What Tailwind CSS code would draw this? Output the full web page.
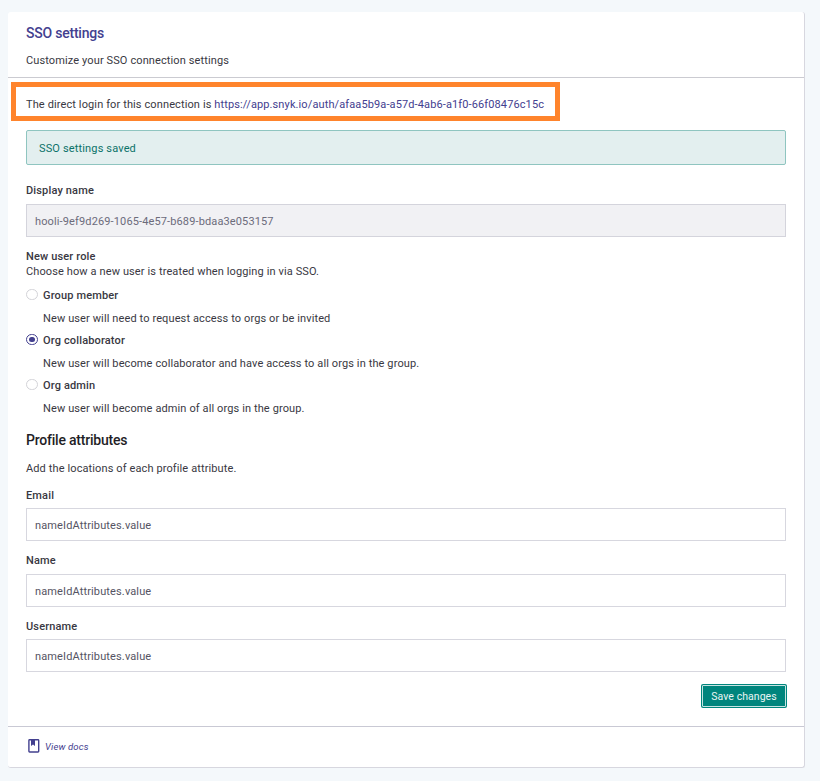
<!DOCTYPE html>
<html lang="en">
<head>
<meta charset="utf-8">
<title>SSO settings</title>
<script src="https://cdn.jsdelivr.net/npm/@tailwindcss/browser@4"></script>
</head>
<body class="h-[781px] overflow-hidden bg-[#f4f8fb] pt-3 pl-2 font-[Roboto,sans-serif] text-[11px] leading-4 tracking-[0.115px] text-[#393842]">
<main class="relative h-[756px] w-[797px] rounded-[3px] border-r border-b border-[#d7d7df] bg-white">
  <header class="h-[66px] border-b border-[#cbcbd1] px-[18px] pt-[11px]">
    <h1 class="text-[14px] leading-5 font-medium tracking-[-0.22px] text-[#43408f]">SSO settings</h1>
    <p class="mt-[10px]">Customize your SSO connection settings</p>
  </header>
  <div class="absolute top-[70px] left-[3px] h-[39px] w-[549px] border-[5px] border-[#ff842c]"></div>
  <form class="h-[648px] px-[18px] pt-[19px]">
    <p>The direct login for this connection is <a class="text-[#43408f]">https://app.snyk.io/auth/afaa5b9a-a57d-4ab6-a1f0-66f08476c15c</a></p>
    <div class="mt-[17px] flex h-[35px] w-[760px] items-center rounded-[2px] border border-[#8fc5c0] bg-[#e3efef] px-3 pt-[2px] tracking-[0.15px] text-[#0b7269]">SSO settings saved</div>
    <div class="mt-[18px] font-medium tracking-[0.15px]">Display name</div>
    <div class="mt-[5px] flex h-[33px] w-[760px] items-center border border-[#d4d4dc] bg-[#f1f1f4] px-2 pt-[2px] tracking-[0.13px] text-[#6c6b7b]">hooli-9ef9d269-1065-4e57-b689-bdaa3e053157</div>
    <div class="mt-3 font-medium tracking-[0.15px]">New user role</div>
    <p class="-mt-px">Choose how a new user is treated when logging in via SSO.</p>
    <div class="mt-2 flex h-4 items-center gap-[5px] font-medium tracking-[0.15px]"><span class="-mt-[3px] h-[11px] w-3 rounded-full border border-[#d3d3d8]"></span>Group member</div>
    <p class="mt-[7px] pl-[17px]">New user will need to request access to orgs or be invited</p>
    <div class="mt-[6px] flex h-4 items-center gap-[5px] font-medium tracking-[0.15px]"><span class="-mt-[3px] flex h-[11px] w-3 items-center justify-center rounded-full border border-[#43408f]"><span class="h-[5px] w-[6px] rounded-full bg-[#43408f]"></span></span>Org collaborator</div>
    <p class="mt-[7px] pl-[17px]">New user will become collaborator and have access to all orgs in the group.</p>
    <div class="mt-[6px] flex h-4 items-center gap-[5px] font-medium tracking-[0.15px]"><span class="-mt-[3px] h-[11px] w-3 rounded-full border border-[#d3d3d8]"></span>Org admin</div>
    <p class="mt-[7px] pl-[17px]">New user will become admin of all orgs in the group.</p>
    <h2 class="mt-[13px] text-[14px] leading-5 font-medium tracking-[-0.22px] text-[#1f1e26]">Profile attributes</h2>
    <p class="mt-[11px]">Add the locations of each profile attribute.</p>
    <div class="mt-[11px] font-medium tracking-[0.15px]">Email</div>
    <div class="mt-1 flex h-[33px] w-[760px] items-center border border-[#d7d7df] px-2 pt-[2px] tracking-[0.13px] text-[#555463]">nameIdAttributes.value</div>
    <div class="mt-3 font-medium tracking-[0.15px]">Name</div>
    <div class="mt-[5px] flex h-[33px] w-[760px] items-center border border-[#d7d7df] px-2 pt-[2px] tracking-[0.13px] text-[#555463]">nameIdAttributes.value</div>
    <div class="mt-3 font-medium tracking-[0.15px]">Username</div>
    <div class="mt-1 flex h-[33px] w-[760px] items-center border border-[#d7d7df] px-2 pt-[2px] tracking-[0.13px] text-[#555463]">nameIdAttributes.value</div>
    <div class="mt-3 flex w-[761px] justify-end">
      <button type="button" class="h-6 w-[86px] rounded-[2px] bg-[#00857d] p-px text-[10.5px] tracking-[0.05px] text-[#e8f5f4]"><span class="flex h-full items-center justify-center rounded-[1px] border border-[#c5e4e2] pt-px">Save changes</span></button>
    </div>
  </form>
  <footer class="flex h-[41px] items-center border-t border-[#c9c9d4] pl-5">
    <svg class="-mt-[2px] h-[14px] w-3" viewBox="0 0 12 14" fill="none"><rect x=".9" y=".8" width="9.8" height="12.2" rx=".7" stroke="#43408f" stroke-width="1.4"/><path d="M3 1h4v6L5 5.4 3 7Z" fill="#43408f"/></svg>
    <a class="ml-[5px] text-[9.5px] tracking-[0.15px] text-[#43408f] italic">View docs</a>
  </footer>
</main>
</body>
</html>
